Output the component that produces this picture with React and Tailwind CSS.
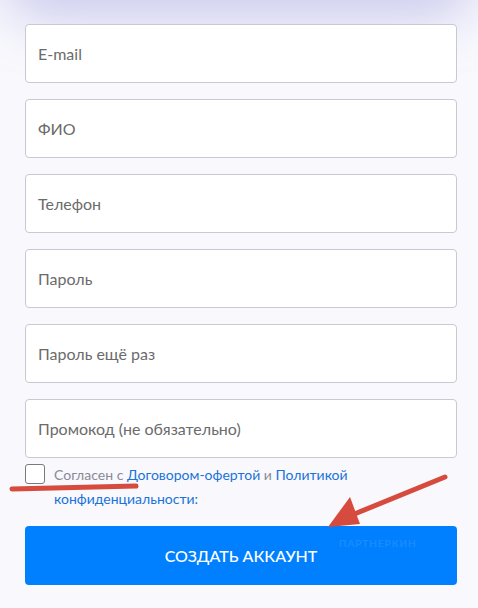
import React from 'react';

const fields = ['E-mail', 'ФИО', 'Телефон', 'Пароль', 'Пароль ещё раз', 'Промокод (не обязательно)'];

export default function App() {
  return (
    <div className="relative w-[478px] h-[608px] overflow-hidden bg-[#f8f8fd]" style={{ fontFamily: 'Lato, "Noto Sans", sans-serif' }}>
      {/* shadow of the card above */}
      <div className="absolute left-[20px] right-[20px] top-[-60px] h-[60px] rounded-[30px] shadow-[0_0_50px_20px_rgba(170,170,225,0.55)] bg-[#e6e6f6]" />

      <div className="relative flex flex-col pl-[25px] pr-[21px] pt-[24px] gap-[16px]">
        {fields.map((f) => (
          <div
            key={f}
            className="h-[59px] rounded-[4px] border border-[#c9c9d3] bg-white flex items-center pl-[12px] text-[16px] text-[#6b6b6b]"
          >
            {f}
          </div>
        ))}
      </div>

      <div className="relative flex pl-[25px] pr-[21px] mt-[5px] gap-[9px]">
        <div className="w-[20px] h-[20px] mt-[1px] shrink-0 rounded-[3px] border border-[#7a7a7a] bg-white" />
        <div className="text-[14px] leading-[24px] text-[#8a8a96]">
          Согласен с <span className="text-[#1a73d9]">Договором-офертой</span> и{' '}
          <span className="text-[#1a73d9]">Политикой</span>
          <br />
          <span className="text-[#1a73d9]">конфиденциальности:</span>
        </div>
      </div>

      <div className="relative pl-[25px] pr-[21px] mt-[15px]">
        <div className="relative h-[59px] rounded-[4px] bg-[#0080ff] flex items-center justify-center text-white text-[16px] font-medium">
          СОЗДАТЬ АККАУНТ
          <span className="absolute left-[314px] top-[10px] text-[10px] tracking-[1px] text-white/10">ПАРТНЕРКИН</span>
        </div>
      </div>

      {/* red annotations */}
      <svg className="absolute left-0 top-0 pointer-events-none" width="478" height="608">
        <path d="M12 489 L136 486" stroke="#d64b3e" strokeWidth="5" strokeLinecap="round" fill="none" />
        <path d="M445 477 L352 515" stroke="#d64b3e" strokeWidth="5" strokeLinecap="round" fill="none" />
        <path d="M328 527 L350 497 L360 524 Z" fill="#d64b3e" />
      </svg>
    </div>
  );
}
